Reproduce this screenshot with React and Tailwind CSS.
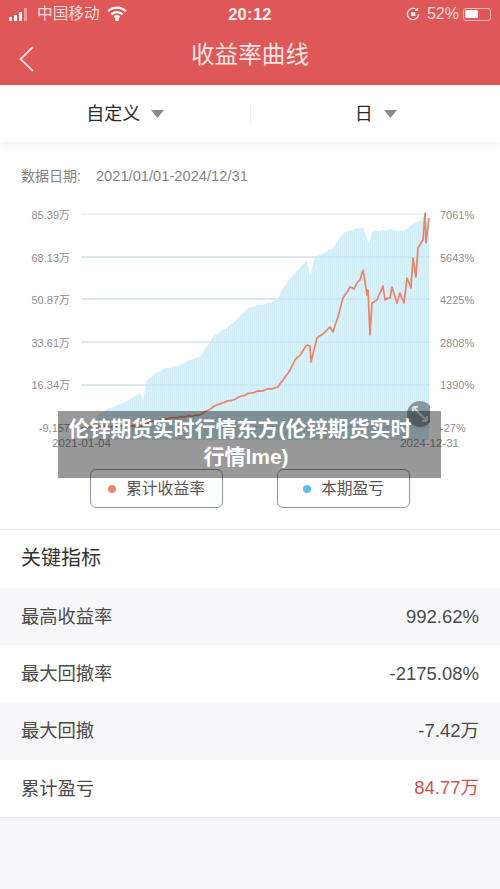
const leftLabels = ['85.39万', '68.13万', '50.87万', '33.61万', '16.34万', '-9,157']
const rightLabels = ['7061%', '5643%', '4225%', '2808%', '1390%', '-27%']
const gridLines = [214, 257, 299, 342, 385, 427]

const areaKnots = [
  [81, 430], [90, 427], [100, 413], [113, 407], [125, 402], [140, 393], [143, 400], [147, 380], [157, 372], [168, 368],
  [180, 365], [190, 360], [200, 357], [213, 337], [225, 329], [233, 323], [242, 314], [250, 307], [265, 304], [277, 300],
  [283, 288], [293, 275], [300, 268], [307, 260], [310, 275], [315, 257], [325, 252], [332, 249], [338, 240], [345, 232],
  [355, 229], [363, 227], [369, 243], [372, 232], [382, 230], [390, 229], [398, 231], [405, 230], [412, 225], [417, 222],
  [425, 216], [429, 218],
]

const lineKnots = [
  [81, 428], [95, 426], [110, 427], [125, 425], [140, 427], [150, 422], [165, 419], [180, 417], [200, 415], [213, 407],
  [222, 403], [233, 400], [242, 396], [250, 393], [265, 390], [278, 387], [285, 377], [290, 370], [295, 360], [301, 354],
  [307, 345], [310, 346], [311, 362], [314, 350], [317, 338], [323, 334], [330, 327], [333, 332], [338, 317], [343, 298],
  [350, 287], [354, 289], [357, 283], [360, 280], [363, 270], [367, 295], [368, 290], [370, 335], [372, 303], [377, 300],
  [383, 286], [385, 300], [388, 298], [390, 298], [392, 287], [397, 303], [400, 293], [404, 303], [407, 278], [411, 288],
  [413, 258], [416, 277], [418, 248], [423, 240], [425, 213], [426, 243], [429, 218],
]

// fills in the knots with a little repeatable wobble so the curves look like daily data
function roughen(knots, amount) {
  const out = []
  knots.forEach(([x, y], i) => {
    out.push(`${x},${y}`)
    const next = knots[i + 1]
    if (!next) return
    const steps = Math.floor((next[0] - x) / 2)
    for (let s = 1; s < steps; s++) {
      const t = s / steps
      const px = x + (next[0] - x) * t
      const py = y + (next[1] - y) * t + Math.sin(px * 2.3) * amount
      out.push(`${px.toFixed(1)},${py.toFixed(1)}`)
    }
  })
  return out.join(' ')
}

const areaPoints = `${roughen(areaKnots, 0.7)} 429,440 81,440`
const linePoints = roughen(lineKnots, 0.5)

const metrics = [
  { label: '最高收益率', value: '992.62%', bg: 'bg-[#f8f8fb]', color: 'text-[#4a4a4a]' },
  { label: '最大回撤率', value: '-2175.08%', bg: 'bg-white', color: 'text-[#4a4a4a]' },
  { label: '最大回撤', value: '-7.42万', bg: 'bg-[#f8f8fb]', color: 'text-[#4a4a4a]' },
  { label: '累计盈亏', value: '84.77万', bg: 'bg-white', color: 'text-[#d4504f]' },
]

function Caret() {
  return (
    <svg width="13" height="8" viewBox="0 0 13 8">
      <polygon points="0,0 13,0 6.5,8" fill="#8a8a8a" />
    </svg>
  )
}

function StatusBar() {
  return (
    <div className="h-[28px] pl-[9px] pr-[9px] flex items-center justify-between text-[#f8dcdc]">
      <div className="flex items-center w-[170px]">
        <div className="flex items-end gap-[2px] h-[14px]">
          <span className="w-[3px] h-[4px] bg-white"></span>
          <span className="w-[3px] h-[6px] bg-white"></span>
          <span className="w-[3px] h-[9px] bg-white"></span>
          <span className="w-[3px] h-[13px] bg-[#ee9a9a]"></span>
        </div>
        <span className="ml-[10px] text-[15.7px] leading-none">中国移动</span>
        <svg className="ml-[7px]" width="20" height="15" viewBox="0 0 20 15" fill="none" stroke="#fff" strokeWidth="2.2">
          <path d="M1.2 5.2a12.5 12.5 0 0 1 17.6 0" />
          <path d="M4.4 8.4a8 8 0 0 1 11.2 0" />
          <path d="M7.4 11.2a3.8 3.8 0 0 1 5.2 0" />
          <circle cx="10" cy="13.2" r="0.8" fill="#fff" />
        </svg>
      </div>
      <span className="text-[16.5px] font-bold leading-none tracking-[0.3px] text-[#fbeeee]">20:12</span>
      <div className="flex items-center justify-end w-[170px]">
        <svg width="14" height="14" viewBox="0 0 14 14" fill="none" stroke="#fbe6e6" strokeWidth="1.3">
          <path d="M12.6 7a5.6 5.6 0 1 1-1.7-4" />
          <path d="M11.5 1v2.4H9" />
          <rect x="5" y="5.2" width="4.4" height="3.8" fill="#fbe6e6" stroke="none" />
        </svg>
        <span className="ml-[7px] text-[16px] leading-none">52%</span>
        <div className="ml-[4px] w-[28px] h-[13px] rounded-[3px] border border-[#f2bcbc] p-[1.5px]">
          <div className="w-[13px] h-full rounded-[1.5px] bg-white"></div>
        </div>
      </div>
    </div>
  )
}

function Chart() {
  return (
    <div className="relative">
      <div className="flex h-[256px] text-[11px] text-[#8f8f8f]">
        <div className="w-[70px] shrink-0 pt-[2px]">
          {leftLabels.map((l) => (
            <div key={l} className="h-[42.6px] flex items-center justify-end">{l}</div>
          ))}
        </div>
        <svg className="ml-[11px] shrink-0" width="349" height="254" viewBox="81 192 349 254">
          <defs>
            <pattern id="bars" width="2" height="4" patternUnits="userSpaceOnUse">
              <rect width="2" height="4" fill="#d8f1fa" />
              <rect width="0.7" height="4" fill="#cfecf7" />
            </pattern>
          </defs>
          {gridLines.map((y) => (
            <line key={y} x1="81" x2="430" y1={y} y2={y} stroke="#e6e6ec" strokeWidth="1" />
          ))}
          <polygon points={areaPoints} fill="url(#bars)" />
          {gridLines.slice(1).map((y) => (
            <line key={y} x1="81" x2="430" y1={y} y2={y} stroke="#bcdcea" strokeWidth="0.8" />
          ))}
          <polyline points={linePoints} fill="none" stroke="#e98468" strokeWidth="1.7" strokeLinejoin="round" />
          <circle cx="420" cy="414" r="13" fill="#87979f" />
          <path d="M413 407l14 14M413 407h5M413 407v5M427 421h-5M427 421v-5" stroke="#d5dee2" strokeWidth="2" fill="none" />
        </svg>
        <div className="ml-[10px] pt-[2px]">
          {rightLabels.map((l) => (
            <div key={l} className="h-[42.6px] flex items-center">{l}</div>
          ))}
        </div>
      </div>
      <div className="flex justify-between -mt-[13px] mb-[2px] h-[16px] pl-[52px] pr-[41px] text-[11.5px] leading-[16px] text-[#8f8f8f]">
        <span>2021-01-04</span>
        <span>2024-12-31</span>
      </div>
    </div>
  )
}

function LegendButton({ dot, label }) {
  return (
    <div className="w-[133px] h-[39px] flex items-center justify-center rounded-[6px] border border-[#8b98a8]">
      <span className={`w-[8px] h-[8px] rounded-full ${dot}`}></span>
      <span className="ml-[10px] text-[15.8px] leading-none text-[#555]">{label}</span>
    </div>
  )
}

export default function App() {
  return (
    <div className="relative w-[500px] h-[889px] overflow-hidden bg-[#f6f6f9] font-['Liberation_Sans','Noto_Sans_CJK_SC',sans-serif]">
      {/* Header */}
      <div className="h-[85px] bg-[#e05757] shadow-[0_1px_3px_rgba(0,0,0,0.12)]">
        <StatusBar />
        <div className="relative h-[57px] flex items-center justify-center">
          <svg className="absolute left-[18px] top-[17px]" width="18" height="28" viewBox="0 0 18 28" fill="none" stroke="#f8dede" strokeWidth="1.8">
            <path d="M15 2L2.5 14 15 26" />
          </svg>
          <span className="text-[23.6px] leading-none text-[#f9e4e4] -mt-[1px]">收益率曲线</span>
        </div>
      </div>

      {/* Filter tabs */}
      <div className="h-[57px] bg-white flex items-center shadow-[0_2px_8px_rgba(70,70,120,0.1)] relative">
        <div className="flex-1 flex items-center justify-center gap-[11px] pl-[1px]">
          <span className="text-[18px] leading-none text-[#2b2b2b]">自定义</span>
          <Caret />
        </div>
        <div className="w-px h-[20px] bg-[#efefef]"></div>
        <div className="flex-1 flex items-center justify-center gap-[11px] pl-[1px]">
          <span className="text-[18px] leading-none text-[#2b2b2b]">日</span>
          <Caret />
        </div>
      </div>

      {/* Chart panel */}
      <div className="h-[387px] bg-white">
        <div className="h-[50px] pl-[21px] pt-[18px] flex items-center text-[14px] text-[#858585]">
          <span>数据日期:</span>
          <span className="ml-[15px] text-[14.7px]">2021/01/01-2024/12/31</span>
        </div>
        <Chart />
        <div className="mt-[18px] pl-[90px] flex gap-[54px]">
          <LegendButton dot="bg-[#ec8a6c]" label="累计收益率" />
          <LegendButton dot="bg-[#5cbfe8]" label="本期盈亏" />
        </div>
      </div>

      {/* Key metrics */}
      <div className="border-t border-[#e8e8e8] border-b bg-white">
        <div className="h-[58px] pl-[21px] pb-[2px] flex items-center text-[20px] leading-none text-[#333]">关键指标</div>
        {metrics.map((m) => (
          <div key={m.label} className={`h-[57.2px] px-[21px] pt-[1px] flex items-center justify-between ${m.bg}`}>
            <span className="text-[18.3px] leading-none text-[#4a4a4a]">{m.label}</span>
            <span className={`text-[18.5px] leading-none ${m.color}`}>{m.value}</span>
          </div>
        ))}
      </div>

      {/* Title overlay */}
      <div className="absolute left-[58px] top-[411px] w-[383px] h-[67px] pt-[4px] pl-[7px] pr-[26px] bg-black/40 text-center text-[21px] leading-[28px] font-bold text-white">
        伦锌期货实时行情东方(伦锌期货实时<span className="inline-block ml-[12px]">行情lme)</span>
      </div>
    </div>
  )
}
